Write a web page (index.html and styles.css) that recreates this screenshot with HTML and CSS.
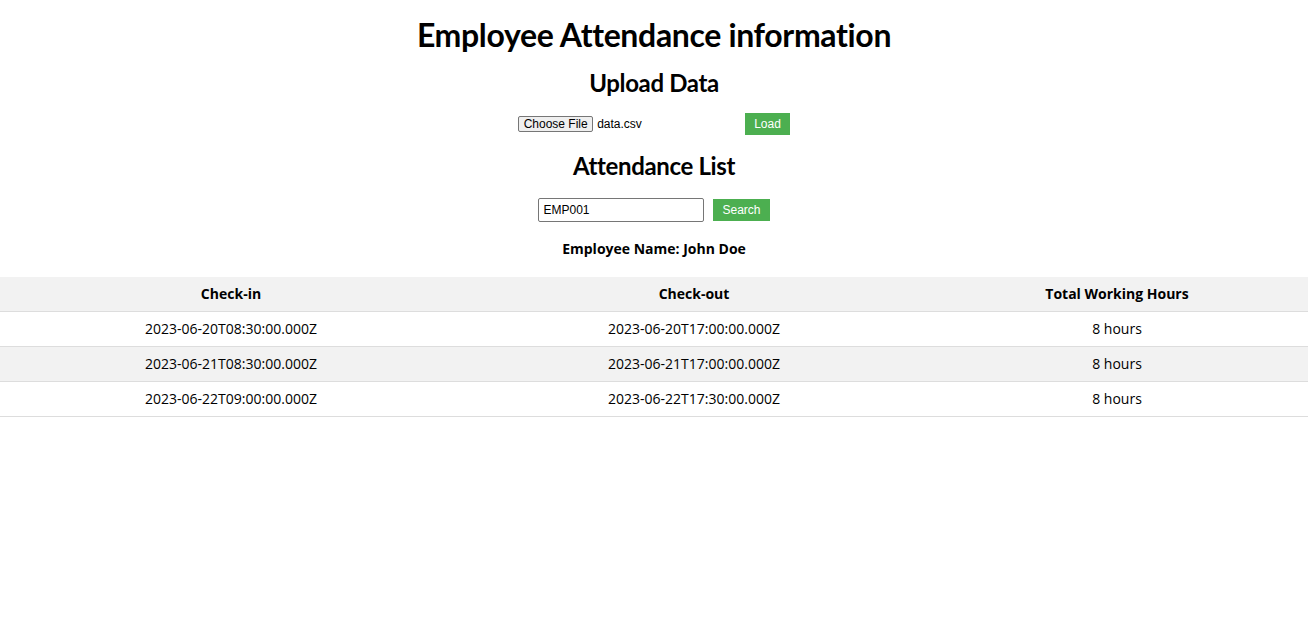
FILE: index.html
```html
<!DOCTYPE html>
<html lang="en">
<head>
<meta charset="utf-8">
<title>Employee Attendance information</title>
<link rel="stylesheet" href="styles.css">
</head>
<body>
<main class="page">
  <h1 class="title">Employee Attendance information</h1>
  <section class="upload">
    <h2 class="subtitle">Upload Data</h2>
    <div class="controls">
      <div class="file-input">
        <span class="file-btn">Choose File</span>
        <span class="file-name">data.csv</span>
      </div>
      <button class="btn" type="button">Load</button>
    </div>
  </section>
  <section class="list">
    <h2 class="subtitle">Attendance List</h2>
    <div class="controls search-row">
      <input class="search-input" type="text" value="EMP001">
      <button class="btn" type="button">Search</button>
    </div>
    <p class="emp-name">Employee Name: John Doe</p>
    <table class="table">
      <thead>
        <tr>
          <th class="col-in">Check-in</th>
          <th class="col-out">Check-out</th>
          <th class="col-hours">Total Working Hours</th>
        </tr>
      </thead>
      <tbody>
        <tr><td>2023-06-20T08:30:00.000Z</td><td>2023-06-20T17:00:00.000Z</td><td>8 hours</td></tr>
        <tr><td>2023-06-21T08:30:00.000Z</td><td>2023-06-21T17:00:00.000Z</td><td>8 hours</td></tr>
        <tr><td>2023-06-22T09:00:00.000Z</td><td>2023-06-22T17:30:00.000Z</td><td>8 hours</td></tr>
      </tbody>
    </table>
  </section>
</main>
</body>
</html>
```
FILE: styles.css
```css
html, body {
  margin: 0;
  padding: 0;
  background: #fff;
}
body {
  font-family: "Open Sans", "DejaVu Sans", sans-serif;
  color: #000;
}
.page {
  display: flex;
  flex-direction: column;
  align-items: center;
}
.title {
  font-family: Lato, "Open Sans", sans-serif;
  font-size: 32px;
  font-weight: 700;
  line-height: 38px;
  letter-spacing: -0.35px;
  font-variant-ligatures: none;
  margin: 16px 0 0;
}
.upload, .list {
  display: flex;
  flex-direction: column;
  align-items: center;
  width: 100%;
}
.subtitle {
  font-family: Lato, "Open Sans", sans-serif;
  font-size: 24px;
  font-weight: 700;
  line-height: 28px;
  letter-spacing: -0.36px;
  font-variant-ligatures: none;
  margin: 0;
}
.upload .subtitle { margin-top: 15px; }
.list .subtitle { margin-top: 17px; }
.controls {
  display: flex;
  align-items: center;
  margin-top: 16px;
}
.file-input {
  width: 223px;
  display: flex;
  align-items: center;
  font-family: "Liberation Sans", Arial, sans-serif;
  font-size: 12px;
}
.file-btn {
  box-sizing: border-box;
  height: 16px;
  line-height: 14px;
  padding: 0 4.5px;
  border: 1px solid #767676;
  border-radius: 2px;
  background: #efefef;
  color: #000;
}
.file-name {
  margin-left: 4px;
}
.btn {
  font-family: "Liberation Sans", Arial, sans-serif;
  font-size: 12px;
  line-height: 14px;
  padding: 4px 9px;
  background: #4caf50;
  color: #fff;
  border: none;
  border-radius: 0;
  margin-left: 4px;
}
.search-row { margin-top: 18px; }
.search-row .btn { margin-left: 9px; }
.search-input {
  box-sizing: border-box;
  width: 166px;
  height: 24px;
  font-family: "Liberation Sans", Arial, sans-serif;
  font-size: 12px;
  padding: 1px 4px;
  border: 1px solid #767676;
  border-radius: 2px;
  color: #000;
}
.emp-name {
  font-weight: 700;
  font-size: 14px;
  line-height: 18px;
  margin: 18px 0 0;
}
.table {
  margin-top: 19px;
  width: 100%;
  border-collapse: collapse;
  table-layout: fixed;
  font-size: 14px;
}
.table th, .table td {
  padding: 8px;
  line-height: 18px;
  text-align: center;
  border-bottom: 1px solid #ddd;
}
.table th {
  background: #f2f2f2;
  font-weight: 700;
}
.table tbody tr:nth-child(even) td {
  background: #f2f2f2;
}
.col-in { width: 446px; }
.col-out { width: 448px; }
.col-hours { width: auto; }
```
